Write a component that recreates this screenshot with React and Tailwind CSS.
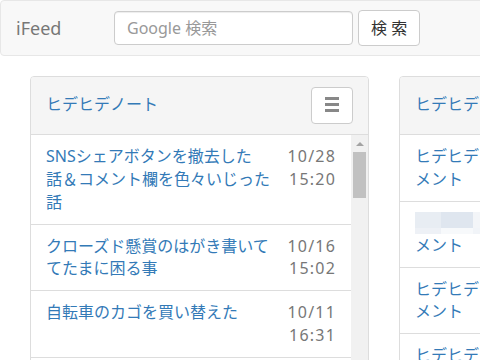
import React from "react";

const font = { fontFamily: '"Noto Sans","Noto Sans CJK JP",sans-serif' };

function Item({ lines, date, time, blurred }) {
  return (
    <div className="flex border-b border-[#ddd] px-[15px] py-[10px] text-[16px] leading-[22.86px]">
      <div className="w-[230px] shrink-0 text-[#337ab7]">
        {blurred && (
          <div className="flex h-[22px] w-[80px] flex-col">
            <div className="flex h-[16px]">
              <div className="w-[26px] bg-[#e8edf3]" />
              <div className="w-[32px] bg-[#dfe6ef]" />
              <div className="w-[22px] bg-[#f3f5f8]" />
            </div>
            <div className="flex h-[6px]">
              <div className="w-[26px] bg-[#eef1f6]" />
              <div className="w-[32px] bg-[#f7f9fb]" />
              <div className="w-[22px] bg-[#f1f4f8]" />
            </div>
          </div>
        )}
        {lines.map((l, i) => (
          <div key={i} className="whitespace-nowrap">{l}</div>
        ))}
      </div>
      <div className="flex-1 text-right tracking-[1.2px] text-[#777]">
        <div>{date}</div>
        <div>{time}</div>
      </div>
    </div>
  );
}

function Panel({ title, items, menu }) {
  return (
    <div className="w-[339px] shrink-0 overflow-hidden rounded-[4px] border border-[#ddd] bg-white">
      <div className="flex h-[58px] items-center justify-between border-b border-[#ddd] bg-[#f5f5f5] px-[15px] py-[10px]">
        <div className="pb-[3px] text-[16px] text-[#337ab7]">{title}</div>
        {menu && (
          <div className="flex h-[37px] w-[42px] flex-col items-center justify-center gap-[3px] rounded-[4px] border border-[#ccc] bg-white pb-[3px]">
            <div className="h-[3px] w-[14px] bg-[#888]" />
            <div className="h-[3px] w-[14px] bg-[#888]" />
            <div className="h-[3px] w-[14px] bg-[#888]" />
          </div>
        )}
      </div>
      <div className="flex h-[300px]">
        <div className="flex-1">
          {items.map((it, i) => (
            <Item key={i} {...it} />
          ))}
        </div>
        {menu && (
          <div className="flex w-[17px] flex-col bg-[#f1f1f1]">
            <div className="flex h-[17px] items-center justify-center">
              <div className="h-0 w-0 border-b-[4px] border-l-[4px] border-r-[4px] border-b-[#a3a3a3] border-l-transparent border-r-transparent" />
            </div>
            <div className="mx-[2px] h-[46px] bg-[#c1c1c1]" />
          </div>
        )}
      </div>
    </div>
  );
}

export default function App() {
  const left = [
    { lines: ["SNSシェアボタンを撤去した", "話＆コメント欄を色々いじった", "話"], date: "10/28", time: "15:20" },
    { lines: ["クローズド懸賞のはがき書いて", "てたまに困る事"], date: "10/16", time: "15:02" },
    { lines: ["自転車のカゴを買い替えた"], date: "10/11", time: "16:31" },
    { lines: ["ヒデヒデノート"], date: "10/05", time: "12:00" },
  ];
  const right = [
    { lines: ["ヒデヒデノートのコ", "メント"], date: "", time: "" },
    { lines: ["メント"], date: "", time: "", blurred: true },
    { lines: ["ヒデヒデノートのコ", "メント"], date: "", time: "" },
    { lines: ["ヒデヒデノートのコ", "メント"], date: "", time: "" },
  ];
  return (
    <div className="h-[360px] w-[480px] overflow-hidden bg-white" style={font}>
      <nav className="flex h-[56px] w-[540px] items-center rounded-[4px] border border-[#e7e7e7] bg-[#f8f8f8] pl-[15px]">
        <div className="w-[98px] shrink-0 text-[18px] text-[#777]">iFeed</div>
        <div className="flex h-[34px] w-[239px] shrink-0 items-center rounded-[4px] border border-[#ccc] bg-white px-[12px] text-[16px] text-[#999] shadow-[inset_0_1px_1px_rgba(0,0,0,0.075)]">
          Google 検索
        </div>
        <div className="ml-[5px] flex h-[36px] shrink-0 items-center rounded-[4px] border border-[#ccc] bg-white px-[12px] text-[16px] text-[#333]">
          検 索
        </div>
      </nav>
      <div className="mt-[20px] flex gap-[30px] pl-[30px]">
        <Panel title="ヒデヒデノート" items={left} menu />
        <Panel title="ヒデヒデノート" items={right} />
      </div>
    </div>
  );
}
